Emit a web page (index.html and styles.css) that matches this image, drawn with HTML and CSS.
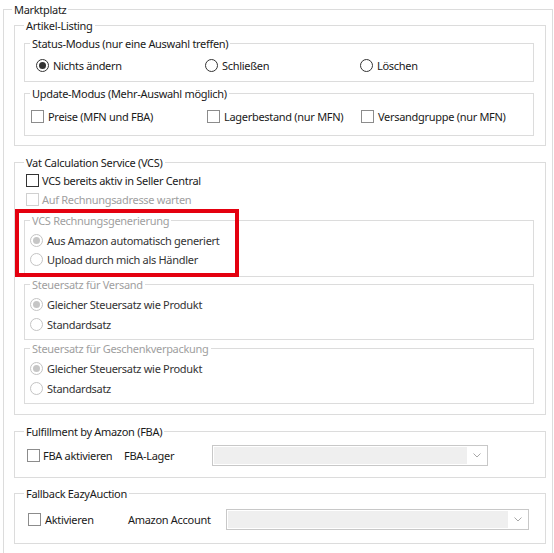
FILE: index.html
```html
<!DOCTYPE html>
<html lang="de">
<head>
<meta charset="utf-8">
<link rel="stylesheet" href="styles.css">
</head>
<body>
<div class="page">
  <section class="grp outer">
    <div class="lg lg-outer">Marktplatz</div>
    <div class="body body-outer">

      <section class="grp artikel">
        <div class="lg lg-l1">Artikel-Listing</div>
        <div class="body body-artikel">
          <section class="grp status">
            <div class="lg lg-l2">Status-Modus (nur eine Auswahl treffen)</div>
            <div class="opts opts-status">
              <label class="opt"><span class="radio on"></span><span>Nichts ändern</span></label>
              <label class="opt"><span class="radio"></span><span>Schließen</span></label>
              <label class="opt"><span class="radio"></span><span>Löschen</span></label>
            </div>
          </section>
          <section class="grp update">
            <div class="lg lg-l2">Update-Modus (Mehr-Auswahl möglich)</div>
            <div class="opts opts-update">
              <label class="opt"><span class="check"></span><span>Preise (MFN und FBA)</span></label>
              <label class="opt"><span class="check"></span><span>Lagerbestand (nur MFN)</span></label>
              <label class="opt"><span class="check"></span><span>Versandgruppe (nur MFN)</span></label>
            </div>
          </section>
        </div>
      </section>

      <section class="grp vcs">
        <div class="lg lg-l1">Vat Calculation Service (VCS)</div>
        <div class="body body-vcs">
          <label class="opt row-vcs"><span class="check dark"></span><span>VCS bereits aktiv in Seller Central</span></label>
          <label class="opt row-vcs disabled"><span class="check dis"></span><span>Auf Rechnungsadresse warten</span></label>

          <section class="grp sub sub-first">
            <div class="lg lg-l2 lg-dis">VCS Rechnungsgenerierung</div>
            <div class="body body-sub">
              <label class="opt dim"><span class="radio dis on"></span><span>Aus Amazon automatisch generiert</span></label>
              <label class="opt dim"><span class="radio dis"></span><span>Upload durch mich als Händler</span></label>
            </div>
          </section>
          <section class="grp sub sub-second">
            <div class="lg lg-l2 lg-dis">Steuersatz für Versand</div>
            <div class="body body-sub">
              <label class="opt dim"><span class="radio dis on"></span><span>Gleicher Steuersatz wie Produkt</span></label>
              <label class="opt dim"><span class="radio dis"></span><span>Standardsatz</span></label>
            </div>
          </section>
          <section class="grp sub sub-third">
            <div class="lg lg-l2 lg-dis">Steuersatz für Geschenkverpackung</div>
            <div class="body body-sub">
              <label class="opt dim"><span class="radio dis on"></span><span>Gleicher Steuersatz wie Produkt</span></label>
              <label class="opt dim"><span class="radio dis"></span><span>Standardsatz</span></label>
            </div>
          </section>
        </div>
      </section>

      <section class="grp fba">
        <div class="lg lg-l1">Fulfillment by Amazon (FBA)</div>
        <div class="body body-fba">
          <label class="opt field-a"><span class="check"></span><span>FBA aktivieren</span></label>
          <span class="field-label fl-fba">FBA-Lager</span>
          <div class="combo combo-fba">
            <div class="combo-fill"></div>
            <div class="combo-arrow"><svg width="8" height="5" viewBox="0 0 8 5"><path d="M0.5 0.5 L4 4 L7.5 0.5" fill="none" stroke="#a8a8a8" stroke-width="1"/></svg></div>
          </div>
        </div>
      </section>

      <section class="grp fallback">
        <div class="lg lg-l1">Fallback EazyAuction</div>
        <div class="body body-fallback">
          <label class="opt field-b"><span class="check"></span><span>Aktivieren</span></label>
          <span class="field-label fl-acc">Amazon Account</span>
          <div class="combo combo-acc">
            <div class="combo-fill"></div>
            <div class="combo-arrow"><svg width="8" height="5" viewBox="0 0 8 5"><path d="M0.5 0.5 L4 4 L7.5 0.5" fill="none" stroke="#a8a8a8" stroke-width="1"/></svg></div>
          </div>
        </div>
      </section>

    </div>
  </section>
  <div class="highlight"></div>
</div>
</body>
</html>
```

FILE: styles.css
```css
* { box-sizing: border-box; }
html, body { margin: 0; padding: 0; background: #fff; }
body {
  font-family: "Noto Sans", "Open Sans", sans-serif;
  font-size: 11px;
  letter-spacing: -0.3px;
  color: #1a1a1a;
  width: 554px;
  height: 553px;
  overflow: hidden;
}
.page {
  position: relative;
  padding: 9px 1px 0 3px;
}

/* group boxes */
.grp {
  border: 1px solid #dcdcdc;
  display: flex;
  flex-direction: column;
}
.lg {
  align-self: flex-start;
  margin-top: -8px;
  padding: 0 2px;
  height: 15px;
  line-height: 15px;
  background: #fff;
  white-space: nowrap;
}
.lg-outer { margin-left: 8px; }
.lg-l1 { margin-left: 9px; }
.lg-l2 { margin-left: 5px; }
.lg-dis { color: #a0a0a0; }

.body { display: flex; flex-direction: column; }
.body-outer { padding: 0 6px 12px 10px; }
.artikel { margin-top: 8px; }
.body-artikel { padding: 0 11px 9px 9px; }
.status { margin-top: 10px; }
.update { margin-top: 11px; }
.vcs { margin-top: 16px; }
.body-vcs { padding: 0 11px 10px 9px; }
.fba { margin-top: 16px; }
.fallback { margin-top: 15px; }

/* options */
.opt {
  display: flex;
  align-items: center;
  gap: 4px;
  height: 20px;
  white-space: nowrap;
}
.opts { display: grid; }
.opts-status {
  grid-template-columns: 169px 155px auto;
  padding: 4px 0 6px 11px;
}
.opts-update {
  grid-template-columns: 176px 154px auto;
  padding: 5px 0 9px 6px;
}
.row-vcs { margin-left: 2px; gap: 3px; height: 19px; }
.row-vcs:first-child { height: 20px; }
.disabled { color: #a0a0a0; }
.dim { color: #333; }

.sub-first { margin-top: 11px; }
.sub-first .body-sub { padding: 3px 0 7px 5px; }
.sub-first .opt { height: 19px; }
.sub-second { margin-top: 7px; }
.sub-third { margin-top: 8px; }
.body-sub { padding: 2px 0 5px 5px; }

/* radio */
.radio {
  width: 13px;
  height: 13px;
  border: 1px solid #333;
  border-radius: 50%;
  background: #fff;
  flex: none;
  display: flex;
  align-items: center;
  justify-content: center;
}
.radio.on::after {
  content: "";
  width: 7px;
  height: 7px;
  border-radius: 50%;
  background: #333;
}
.radio.dis { border-color: #c4c4c4; }
.radio.dis.on::after { background: #c6c6c6; }

/* checkbox */
.check {
  width: 13px;
  height: 13px;
  border: 1px solid #8c8c8c;
  background: #fff;
  flex: none;
}
.check.dark { border-color: #333; }
.check.dis { border-color: #d0d0d0; }

/* fba / fallback rows */
.body-fba, .body-fallback { flex-direction: row; align-items: center; }
.body-fba { padding: 6px 0 11px 12px; }
.body-fallback { padding: 8px 0 13px 13px; }
.field-a { width: 97px; gap: 3px; }
.field-b { width: 100px; gap: 4px; }
.fl-fba { width: 88px; }
.fl-acc { width: 98px; }

.combo {
  height: 21px;
  border: 1px solid #c8c8c8;
  padding: 1px;
  display: flex;
  background: #fff;
  flex: none;
}
.combo-fba { width: 276px; }
.combo-acc { width: 303px; }
.combo-fill { flex: 1; background: #efefef; }
.combo-arrow {
  width: 19px;
  display: flex;
  align-items: center;
  justify-content: center;
}

/* red annotation */
.highlight {
  position: absolute;
  left: 15px;
  top: 209px;
  width: 224px;
  height: 68px;
  border: 4px solid #e4000f;
  pointer-events: none;
}
```
